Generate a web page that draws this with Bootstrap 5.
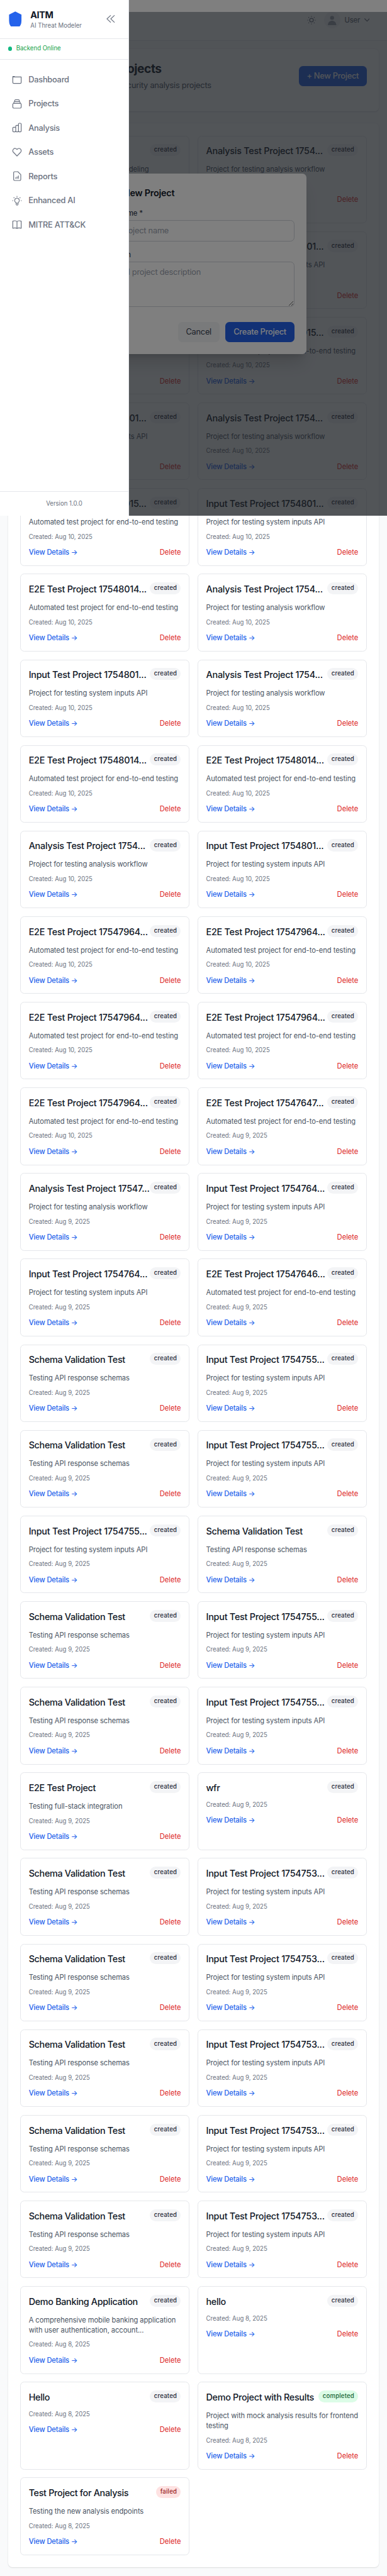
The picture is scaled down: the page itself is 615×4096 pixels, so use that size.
<!DOCTYPE html>
<html lang="en">
<head>
<meta charset="utf-8">
<meta name="viewport" content="width=device-width, initial-scale=1">
<title>AITM - Projects</title>
<link href="https://cdn.jsdelivr.net/npm/bootstrap@5.3.0/dist/css/bootstrap.min.css" rel="stylesheet">
<style>
  html { font-size: 12.8177px; }
  body { font-family: Inter, "Liberation Sans", sans-serif; background: #f9fafb; color: #111827; line-height: 1.5rem; letter-spacing: -.018em; overflow-x: hidden; }
  svg { display: block; flex: none; }
  .topbar { height: calc(5rem + 1px); background: #fff; border-bottom: 1px solid #e5e7eb; color: #6b7280; padding-right: 2.15rem; }
  .avatar { width: 2rem; height: 2rem; background: #f3f4f6; color: #9ca3af; }
  .avatar svg { width: 1.05rem; height: 1.2rem; margin-bottom: .36rem; }
  .chev { width: .68rem; height: .45rem; }
  .txt-sm { font-size: .875rem; line-height: 1.25rem; letter-spacing: -.0075em; }
  .txt-xs { font-size: .75rem; line-height: 1rem; letter-spacing: 0; }
  .fw-500 { font-weight: 500; }
  .main-area { padding: 1rem; }
  .panel { background: #fff; border-radius: .5rem; padding: 1.5rem; box-shadow: 0 1px 2px rgba(0,0,0,.1), 0 0 2px rgba(0,0,0,.08); }
  .page-title { width: 17.5rem; text-align: right; white-space: nowrap; font-size: 1.5rem; line-height: 2rem; font-weight: 700; margin: 0; letter-spacing: -.025em; }
  .page-sub { width: 23.7rem; text-align: right; white-space: nowrap; color: #4b5563; margin: .25rem 0 0; }
  .btn-app { height: 2.5rem; border-radius: .5rem; border: 0; padding: 0 1rem; font-size: 1rem; font-weight: 500; line-height: 2.5rem; white-space: nowrap; letter-spacing: -.02em; }
  .btn-blue, .btn-blue:hover { background: #2563eb; color: #fff; }
  .btn-soft, .btn-soft:hover { background: #f3f4f6; color: #374151; font-weight: 400; }
  .project-grid { display: grid; grid-template-columns: 1fr 1fr; gap: 1rem; }
  .project { border: 1px solid #e5e7eb; border-radius: .5rem; padding: calc(1.0625rem - 1px); min-width: 0; }
  .project h3 { font-size: 1.125rem; line-height: 1.75rem; font-weight: 500; margin: 0; white-space: nowrap; letter-spacing: -.018em; }
  .project h3.plain { letter-spacing: -.0235em; }
  .project p { margin: .75rem 0 0; color: #4b5563; }
  .project .made { color: #6b7280; margin-top: .75rem; }
  .project .links { margin-top: .75rem; }
  .project a { text-decoration: none; }
  .see { color: #2563eb; font-weight: 500; letter-spacing: -.0125em; }
  .del { color: #dc2626; letter-spacing: -.003em; }
  .pill { font-size: .75rem; line-height: 1rem; padding: .25rem .5rem; border-radius: 99px; font-weight: 500; background: #f3f4f6; color: #1f2937; flex: none; letter-spacing: .018em; }
  .pill.completed { background: #dcfce7; color: #166534; }
  .pill.failed { background: #fee2e2; color: #991b1b; }
  .modal-shade { position: absolute; left: 0; right: 0; top: 1.5rem; height: 62.5rem; background: rgba(75,85,99,.5); }
  .dialog-box { width: 28rem; background: #fff; border-radius: .5rem; padding: 1.5rem; box-shadow: 0 20px 25px -5px rgba(0,0,0,.12), 0 8px 10px -6px rgba(0,0,0,.12); }
  .dialog-box h2 { font-size: 1.125rem; line-height: 1.75rem; font-weight: 600; margin: 0 0 1rem; letter-spacing: -.016em; }
  .dialog-box label { color: #374151; display: block; margin-bottom: .25rem; }
  .dialog-box .form-control { border: 1px solid #d1d5db; border-radius: .5rem; padding: .5rem .75rem; font-size: 1rem; line-height: 1.5rem; height: 2.625rem; min-height: 0; margin-bottom: 1rem; letter-spacing: -.018em; }
  .dialog-box textarea.form-control { height: 5.625rem; margin-bottom: 1.875rem; }
  .dialog-box .form-control::placeholder { color: #9ca3af; }
  .dialog-actions { gap: .75rem; }
  .nav-shade { position: absolute; left: 0; right: 0; top: 0; height: 64rem; background: rgba(0,0,0,.5); }
  .side { position: absolute; left: 0; top: 0; width: 16rem; height: 64rem; background: #fff; border-right: 1px solid #e5e7eb; }
  .side-head { height: 4.8125rem; border-bottom: 1px solid #e5e7eb; padding: 0 1.6rem 0 1.12rem; }
  .logo { width: 1.6rem; height: 1.9rem; }
  .brand { padding-left: 1.05rem; }
  .brand-name { font-size: 1.125rem; line-height: 1.75rem; font-weight: 700; letter-spacing: -.03em; }
  .muted { color: #6b7280; }
  .status { height: 2.5625rem; border-bottom: 1px solid #e5e7eb; padding-left: 1rem; color: #16a34a; }
  .dot { width: .5rem; height: .5rem; background: #10b981; }
  .side-nav { padding-top: 1rem; }
  .side-nav a { height: 3rem; padding-left: 1.5rem; gap: .78rem; color: #6b7280; font-weight: 500; text-decoration: none; letter-spacing: -.019em; }
  .side-foot { height: 3.0625rem; border-top: 1px solid #e5e7eb; color: #6b7280; }
  .ico { width: 1.25rem; height: 1.25rem; fill: none; stroke: currentColor; stroke-width: 1.8; stroke-linecap: round; stroke-linejoin: round; }
</style>
</head>
<body class="position-relative">

<header class="topbar d-flex align-items-center justify-content-end">
  <svg class="ico" viewBox="0 0 24 24"><circle cx="12" cy="12" r="4.4"/><path d="M12 2.700v.5M12 20.800v.5M2.700 12h.5M20.800 12h.5M5.300 5.300l.4.4M18.300 18.300l.4.4M5.300 18.700l.4-.4M18.300 5.700l.4-.4"/></svg>
  <span class="avatar rounded-circle d-flex align-items-end justify-content-center ms-3">
    <svg viewBox="0 0 17 19"><circle cx="8.500" cy="4" r="4" fill="currentColor"/><path d="M0 19c0-5.500 4-9 8.500-9s8.500 3.500 8.500 9z" fill="currentColor"/></svg>
  </span>
  <span class="txt-sm fw-500 ms-2 me-2">User</span>
  <svg class="chev" viewBox="0 0 10 6.500" fill="none" stroke="currentColor" stroke-width="1.300" stroke-linecap="round"><path d="M.7.800 5 5.300 9.300.800"/></svg>
</header>

<main class="main-area">
  <section class="panel mb-4">
    <div class="d-flex justify-content-between align-items-center mb-3">
      <div>
        <h1 class="page-title">Threat Modeling Projects</h1>
        <p class="page-sub">Create and manage your security analysis projects</p>
      </div>
      <button class="btn btn-app btn-blue">+ New Project</button>
    </div>
  </section>
  <section class="panel">
    <div class="project-grid" id="projects"></div>
  </section>
</main>

<div class="modal-shade d-flex align-items-center justify-content-center">
  <div class="dialog-box">
    <h2>Create New Project</h2>
    <label class="txt-sm fw-500" for="pname">Project Name *</label>
    <input class="form-control" id="pname" placeholder="Enter project name">
    <label class="txt-sm fw-500" for="pdesc">Description</label>
    <textarea class="form-control" id="pdesc" placeholder="Optional project description"></textarea>
    <div class="d-flex justify-content-end dialog-actions">
      <button class="btn btn-app btn-soft">Cancel</button>
      <button class="btn btn-app btn-blue">Create Project</button>
    </div>
  </div>
</div>

<div class="nav-shade"></div>

<aside class="side d-flex flex-column">
  <div class="side-head d-flex align-items-center">
    <svg class="logo" viewBox="0 0 25.600 30" fill="#2563eb"><path d="M12.800 0 25.100 6.500V18c0 5-1 9-3.600 11.700H4.100C1.500 27 .5 23 .5 18V6.500z"/></svg>
    <div class="flex-fill brand">
      <div class="brand-name">AITM</div>
      <div class="txt-xs muted">AI Threat Modeler</div>
    </div>
    <svg class="ico muted" viewBox="0 0 24 24"><path d="m11.500 20-8.500-8 8.500-8M20.500 20l-8.500-8 8.500-8"/></svg>
  </div>
  <div class="status d-flex align-items-center gap-2 txt-xs"><span class="dot rounded-circle"></span>Backend Online</div>
  <nav class="side-nav flex-fill">
    <a href="#" class="d-flex align-items-center"><svg class="ico" viewBox="0 0 24 24"><path d="M2 5v13a2.500 2.500 0 0 0 2.500 2.500h15A2.500 2.500 0 0 0 22 18V5H2zM2 4h4M22 8V5"/></svg>Dashboard</a>
    <a href="#" class="d-flex align-items-center"><svg class="ico" viewBox="0 0 24 24"><path d="M19.500 11h-15m15 0a2.500 2.500 0 0 1 2.500 2.500V20a2.500 2.500 0 0 1-2.500 2.500h-15A2.500 2.500 0 0 1 2 20v-6.500A2.500 2.500 0 0 1 4.500 11m15 0V9a2 2 0 0 0-2-2M4.500 11V9a2 2 0 0 1 2-2m0 0V4.500a2 2 0 0 1 2-2h7a2 2 0 0 1 2 2V7m-11 0h11"/></svg>Projects</a>
    <a href="#" class="d-flex align-items-center"><svg class="ico" viewBox="0 0 24 24"><path d="M9 20v-7a2 2 0 0 0-2-2H4a2 2 0 0 0-2 2v7a2 2 0 0 0 2 2h3a2 2 0 0 0 2-2zm0 0V8.500a2 2 0 0 1 2-2h2.500a2 2 0 0 1 2 2V20M9 20a2 2 0 0 0 2 2h2.500a2 2 0 0 0 2-2m0 0V3.500a2 2 0 0 1 2-2H20a2 2 0 0 1 2 2V20a2 2 0 0 1-2 2h-2.500a2 2 0 0 1-2-2z"/></svg>Analysis</a>
    <a href="#" class="d-flex align-items-center"><svg class="ico" viewBox="0 0 24 24"><path d="M3.600 4.600a5.400 5.400 0 0 0 0 7.800L12 21l8.400-8.600a5.400 5.400 0 0 0-7.600-7.700L12 5.600l-.8-.9a5.400 5.400 0 0 0-7.600-.1z"/></svg>Assets</a>
    <a href="#" class="d-flex align-items-center"><svg class="ico" viewBox="0 0 24 24"><path d="M9 17.500v-2m3.200 2v-4m3.200 4v-6M18.500 22.500h-12A2.500 2.500 0 0 1 4 20V4a2.500 2.500 0 0 1 2.500-2.500H14l7 7V20a2.500 2.500 0 0 1-2.500 2.500z"/></svg>Reports</a>
    <a href="#" class="d-flex align-items-center"><svg class="ico" viewBox="0 0 24 24"><path d="M9.700 18h4.600M12 2.500v-1m6.700 4 .7-.7M22.500 12h-.7M2.200 12h-.7m3.800-6.500-.7-.7m3.500 10.800a5.500 5.500 0 1 1 7.800 0l-.5.600a3.400 3.400 0 0 0-1 2.400V20.500a2 2 0 1 1-4.400 0v-1.900c0-.9-.4-1.800-1-2.400z"/></svg>Enhanced AI</a>
    <a href="#" class="d-flex align-items-center"><svg class="ico" viewBox="0 0 24 24"><path d="M12 5v15M12 5c-1.500-1.500-3-2-5-2s-3.500.5-5 1v17c1.500-.5 3-1 5-1s3.500.5 5 1.500c1.500-1 3-1.500 5-1.500s3.500.5 5 1V4c-1.500-.5-3-1-5-1s-3.500.5-5 2z"/></svg>MITRE ATT&amp;CK</a>
  </nav>
  <div class="side-foot d-flex align-items-center justify-content-center txt-xs">Version 1.0.0</div>
</aside>

<script src="https://cdn.jsdelivr.net/npm/bootstrap@5.3.0/dist/js/bootstrap.bundle.min.js"></script>
<script>
  const E = "Automated test project for end-to-end testing";
  const A = "Project for testing analysis workflow";
  const I = "Project for testing system inputs API";
  const S = "Testing API response schemas";
  const e2e = (n, d) => ["E2E Test Project " + n + "...", E, d];
  const ana = (n, d) => ["Analysis Test Project " + n + "...", A, d];
  const inp = (n, d) => ["Input Test Project " + n + "...", I, d];
  const sch = () => ["Schema Validation Test", S, 9];
  const projects = [
    ["Test Project", "Project for testing AI threat modeling capabilities", 10], ana("1754", 10),
    inp("1754801", 10), inp("1754801", 10),
    ana("1754", 10), e2e("17548015", 10),
    inp("1754801", 10), ana("1754", 10),
    e2e("17548015", 10), inp("1754801", 10),
    e2e("17548014", 10), ana("1754", 10),
    inp("1754801", 10), ana("1754", 10),
    e2e("17548014", 10), e2e("17548014", 10),
    ana("1754", 10), inp("1754801", 10),
    e2e("17547964", 10), e2e("17547964", 10),
    e2e("17547964", 10), e2e("17547964", 10),
    e2e("17547964", 10), e2e("17547647", 9),
    ana("17547", 9), inp("1754764", 9),
    inp("1754764", 9), e2e("17547646", 9),
    sch(), inp("1754755", 9),
    sch(), inp("1754755", 9),
    inp("1754755", 9), sch(),
    sch(), inp("1754755", 9),
    sch(), inp("1754755", 9),
    ["E2E Test Project", "Testing full-stack integration", 9], ["wfr", "", 9],
    sch(), inp("1754753", 9),
    sch(), inp("1754753", 9),
    sch(), inp("1754753", 9),
    sch(), inp("1754753", 9),
    sch(), inp("1754753", 9),
    ["Demo Banking Application", "A comprehensive mobile banking application with user authentication, account...", 8], ["hello", "", 8],
    ["Hello", "", 8], ["Demo Project with Results", "Project with mock analysis results for frontend testing", 8, "completed"],
    ["Test Project for Analysis", "Testing the new analysis endpoints", 8, "failed"]
  ];
  document.getElementById("projects").innerHTML = projects.map(([name, text, day, state = "created"]) => `
    <article class="project">
      <div class="d-flex justify-content-between align-items-start"><h3 class="${name.endsWith("...") ? "" : "plain"}">${name}</h3><span class="pill ${state}">${state}</span></div>
      ${text ? `<p class="txt-sm">${text}</p>` : ""}
      <div class="made txt-xs">Created: Aug ${day}, 2025</div>
      <div class="links d-flex justify-content-between txt-sm"><a href="#" class="see">View Details →</a><a href="#" class="del">Delete</a></div>
    </article>`).join("");
</script>
</body>
</html>
